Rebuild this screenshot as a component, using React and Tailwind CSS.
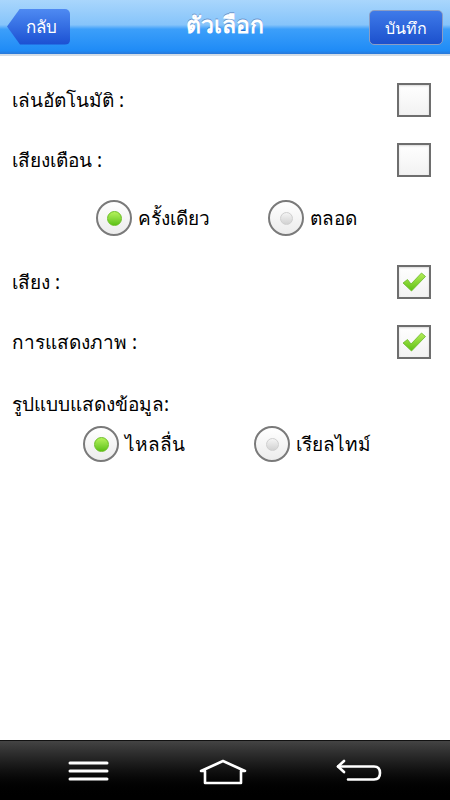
import { useState } from 'react'

const thai = "font-['Noto_Sans','DejaVu_Sans',sans-serif]"

function CheckBox({ checked, onClick }) {
  return (
    <button
      onClick={onClick}
      className="w-[34px] h-[34px] border-2 border-[#6e6e6e] bg-gradient-to-b from-white to-[#f2f2f2] shadow-[inset_0_1px_2px_rgba(0,0,0,0.15)] flex items-center justify-center"
    >
      {checked && (
        <svg width="28" height="24" viewBox="0 0 28 24">
          <defs>
            <linearGradient id="chk" x1="0" y1="0" x2="0" y2="1">
              <stop offset="0" stopColor="#b6ee5a" />
              <stop offset="1" stopColor="#5cbf12" />
            </linearGradient>
          </defs>
          <path
            d="M3 13 L7.5 9.5 L11 14 L21.5 3 L25.5 6.5 L11.5 21 Z"
            fill="url(#chk)"
            stroke="#6ab92a"
            strokeWidth="0.8"
            strokeLinejoin="round"
          />
        </svg>
      )}
    </button>
  )
}

function Radio({ checked, label, onClick }) {
  return (
    <button onClick={onClick} className="flex items-center gap-[6px]">
      <span className="w-[36px] h-[36px] rounded-full border-2 border-[#7a7a7a] bg-gradient-to-b from-white to-[#ececec] flex items-center justify-center">
        {checked ? (
          <span className="w-[15px] h-[15px] rounded-full bg-gradient-to-b from-[#b4f25a] to-[#5cc212] border border-[#6cbf25]" />
        ) : (
          <span className="w-[13px] h-[13px] rounded-full bg-gradient-to-b from-[#f4f4f4] to-[#d2d2d2] border border-[#cfcfcf]" />
        )}
      </span>
      <span className="text-[19px] text-black leading-none">{label}</span>
    </button>
  )
}

function Row({ label, checked, onClick, className = '' }) {
  return (
    <div className={`h-[60px] flex items-center justify-between pl-[12px] pr-[19px] ${className}`}>
      <span className="text-[19px] text-black">{label}</span>
      <CheckBox checked={checked} onClick={onClick} />
    </div>
  )
}

export default function App() {
  const [auto, setAuto] = useState(false)
  const [alert, setAlert] = useState(false)
  const [alertMode, setAlertMode] = useState('once')
  const [sound, setSound] = useState(true)
  const [display, setDisplay] = useState(true)
  const [dataMode, setDataMode] = useState('smooth')

  return (
    <div className={`w-[450px] h-[800px] bg-white flex flex-col ${thai}`}>
      <header className="h-[56px] shrink-0 relative flex items-center justify-between px-[7px] bg-[linear-gradient(#a9d6fc_0%,#86c4fa_46%,#3c9ffa_54%,#1f8bf6_94%,#2a78d8_100%)] border-b-2 border-b-[#d4dde6]">
        <button className="w-[63px] h-[36px] mt-[-1px] flex items-center justify-center pl-[6px] rounded-r-[5px] bg-gradient-to-b from-[#4f8af2] to-[#1b4fd2] [clip-path:polygon(13px_0,100%_0,100%_100%,13px_100%,0_50%)]">
          <span className="text-white text-[17px] leading-none">กลับ</span>
        </button>
        <h1 className="absolute left-1/2 -translate-x-1/2 top-[13px] text-white text-[23px] font-bold leading-none [text-shadow:0_-1px_0_rgba(0,0,80,0.3)]">
          ตัวเลือก
        </h1>
        <button className="w-[74px] h-[35px] mt-[1px] rounded-[5px] border border-[#8b9dc4] bg-gradient-to-b from-[#3f7ae9] to-[#1c50cd] flex items-center justify-center">
          <span className="text-white text-[16px] leading-none">บันทึก</span>
        </button>
      </header>

      <main className="flex-1 pt-[14px]">
        <Row label="เล่นอัตโนมัติ :" checked={auto} onClick={() => setAuto(!auto)} />
        <Row label="เสียงเตือน :" checked={alert} onClick={() => setAlert(!alert)} />
        <div className="h-[56px] flex items-center pl-[96px] gap-[58px]">
          <Radio label="ครั้งเดียว" checked={alertMode === 'once'} onClick={() => setAlertMode('once')} />
          <Radio label="ตลอด" checked={alertMode === 'always'} onClick={() => setAlertMode('always')} />
        </div>
        <Row className="mt-[6px]" label="เสียง :" checked={sound} onClick={() => setSound(!sound)} />
        <Row label="การแสดงภาพ :" checked={display} onClick={() => setDisplay(!display)} />
        <div className="h-[40px] mt-[12px] flex items-center pl-[12px]">
          <span className="text-[19px] text-black">รูปแบบแสดงข้อมูล:</span>
        </div>
        <div className="h-[40px] flex items-center pl-[83px] gap-[69px]">
          <Radio label="ไหลลื่น" checked={dataMode === 'smooth'} onClick={() => setDataMode('smooth')} />
          <Radio label="เรียลไทม์" checked={dataMode === 'realtime'} onClick={() => setDataMode('realtime')} />
        </div>
      </main>

      <nav className="h-[60px] shrink-0 border-t border-t-[#111] bg-gradient-to-b from-[#444] via-[#111] to-black flex items-start pt-[19px] pl-[67px]">
        <svg width="44" height="22" viewBox="0 0 44 22">
          <g stroke="white" strokeWidth="3" strokeLinecap="round">
            <line x1="3" y1="3" x2="40" y2="3" />
            <line x1="3" y1="11" x2="40" y2="11" />
            <line x1="3" y1="19" x2="40" y2="19" />
          </g>
        </svg>
        <svg width="52" height="26" viewBox="0 0 52 26" className="mt-[-1px] ml-[86px]">
          <path
            d="M8 24 L8 12 L4 12 L26 2 L48 12 L44 12 L44 24 Z"
            fill="none"
            stroke="white"
            strokeWidth="2.6"
            strokeLinejoin="round"
          />
        </svg>
        <svg width="48" height="24" viewBox="0 0 48 24" className="mt-[-1px] ml-[86px]">
          <g fill="none" stroke="white" strokeWidth="2.6" strokeLinecap="round" strokeLinejoin="round">
            <path d="M9 2 L3 7.5 L9 13" />
            <path d="M3 7.5 L39 7.5 Q45 7.5 45 14 Q45 20.5 39 20.5 L13 20.5" />
          </g>
        </svg>
      </nav>
    </div>
  )
}
